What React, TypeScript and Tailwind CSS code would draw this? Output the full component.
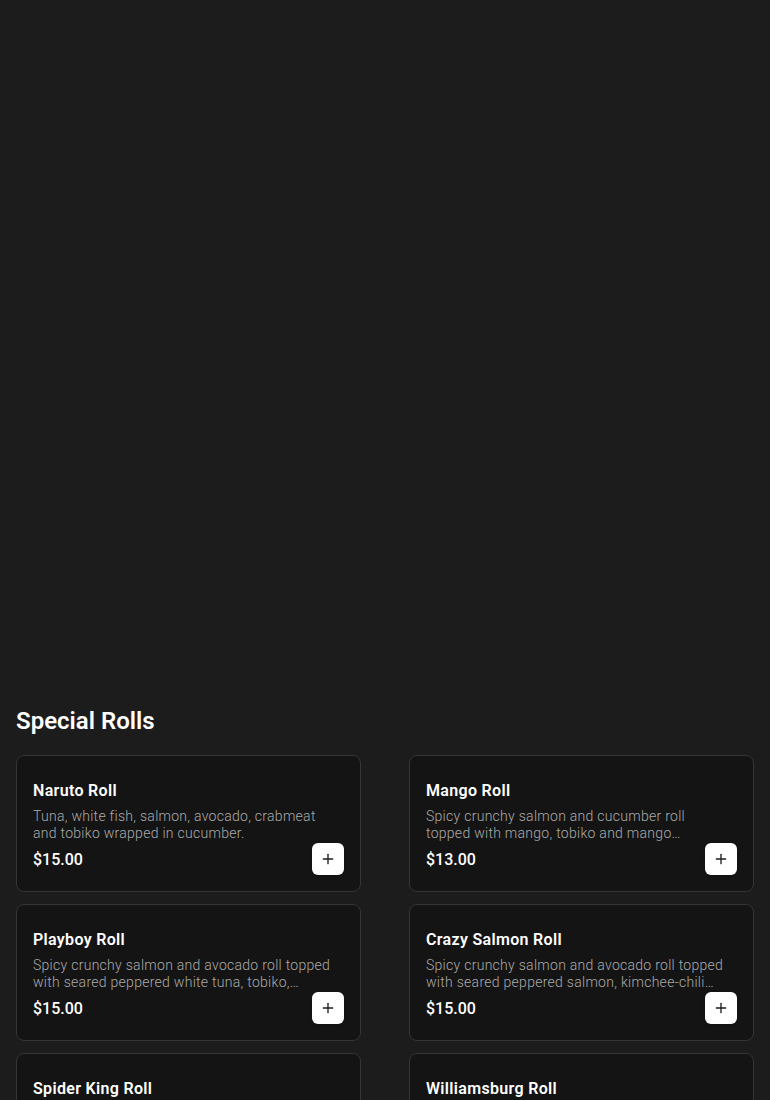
import { Plus } from "lucide-react";

type Roll = {
  name: string;
  description: string;
  price: string;
};

const rolls: Roll[] = [
  {
    name: "Naruto Roll",
    description: "Tuna, white fish, salmon, avocado, crabmeat and tobiko wrapped in cucumber.",
    price: "$15.00",
  },
  {
    name: "Mango Roll",
    description:
      "Spicy crunchy salmon and cucumber roll topped with mango, tobiko and mango habanero sauce.",
    price: "$13.00",
  },
  {
    name: "Playboy Roll",
    description:
      "Spicy crunchy salmon and avocado roll topped with seared peppered white tuna, tobiko, scallion and eel sauce.",
    price: "$15.00",
  },
  {
    name: "Crazy Salmon Roll",
    description:
      "Spicy crunchy salmon and avocado roll topped with seared peppered salmon, kimchee-chili sauce and scallion.",
    price: "$15.00",
  },
  {
    name: "Spider King Roll",
    description: "Soft shell crab, avocado, cucumber and tobiko topped with spicy mayo.",
    price: "$16.00",
  },
  {
    name: "Williamsburg Roll",
    description: "Shrimp tempura and avocado roll topped with tuna, salmon and eel sauce.",
    price: "$16.00",
  },
];

function RollCard({ roll }: { roll: Roll }) {
  return (
    <article className="rounded-lg border border-[#353535] bg-[#141414] px-4 pb-4 pt-[23px]">
      <h3 className="text-base leading-6 font-semibold tracking-[0.02em] text-white">{roll.name}</h3>
      <p className="mt-[5px] line-clamp-2 pr-[11px] text-sm leading-[17px] font-light tracking-[0.02em] text-[#ababab]">
        {roll.description}
      </p>
      <div className="mt-px flex items-center justify-between">
        <span className="pt-px text-base leading-6 font-medium text-white">{roll.price}</span>
        <button
          type="button"
          className="flex h-8 w-8 items-center justify-center rounded-md bg-white text-[#1c1c1c] shadow-sm"
          aria-label={`Add ${roll.name}`}
        >
          <Plus size={16} strokeWidth={2} />
        </button>
      </div>
    </article>
  );
}

export default function App() {
  return (
    <div className="min-h-[1100px] bg-[#1c1c1c] font-['Roboto',_'Liberation_Sans',_sans-serif] text-white">
      <div className="h-[689px]" />
      <section className="px-4 pt-4">
        <h2 className="mb-[18px] text-2xl leading-8 font-semibold text-white">Special Rolls</h2>
        <div className="grid grid-cols-2 gap-x-12 gap-y-3">
          {rolls.map((roll) => (
            <RollCard key={roll.name} roll={roll} />
          ))}
        </div>
      </section>
    </div>
  );
}
